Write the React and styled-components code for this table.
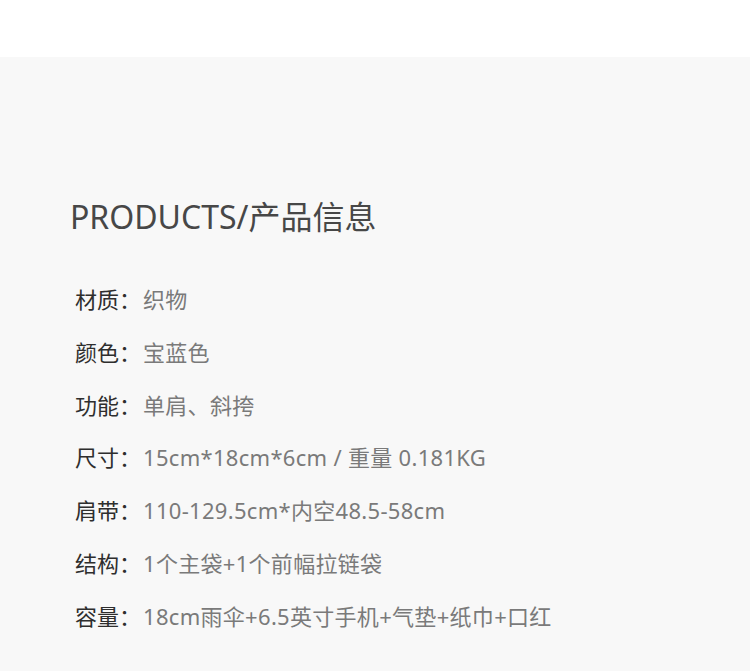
import React from "react";
import styled, { createGlobalStyle } from "styled-components";

const Global = createGlobalStyle`
  html, body { margin: 0; padding: 0; background: #f8f8f8; }
  body { font-family: "Noto Sans", "Noto Sans CJK SC", sans-serif; }
`;

const Page = styled.div`
  width: 750px;
  height: 671px;
  overflow: hidden;
  display: flex;
  flex-direction: column;
`;

const TopBand = styled.div`
  height: 57px;
  background: #ffffff;
  flex: none;
`;

const Section = styled.section`
  flex: 1;
  background: #f8f8f8;
  padding: 138px 0 0 70px;
`;

const Title = styled.h1`
  margin: 0 0 45px;
  font-size: 32px;
  line-height: 44px;
  font-weight: 400;
  color: #474747;
  letter-spacing: 0;
`;

const List = styled.dl`
  margin: 0;
  padding: 0 0 0 5px;
  display: flex;
  flex-direction: column;
  gap: 22.8px;
`;

const Row = styled.div`
  display: flex;
  font-size: 22px;
  line-height: 30px;
`;

const Label = styled.dt`
  margin: 0;
  color: #2e2e2e;
  padding-right: 2px;
`;

const Value = styled.dd`
  margin: 0;
  color: #7a7a7a;
  letter-spacing: 0.3px;
`;

const rows = [
  ["材质：", "织物"],
  ["颜色：", "宝蓝色"],
  ["功能：", "单肩、斜挎"],
  ["尺寸：", "15cm*18cm*6cm / 重量 0.181KG"],
  ["肩带：", "110-129.5cm*内空48.5-58cm"],
  ["结构：", "1个主袋+1个前幅拉链袋"],
  ["容量：", "18cm雨伞+6.5英寸手机+气垫+纸巾+口红"],
];

export default function App() {
  return (
    <Page>
      <Global />
      <TopBand />
      <Section>
        <Title>PRODUCTS/产品信息</Title>
        <List>
          {rows.map(([l, v]) => (
            <Row key={l}>
              <Label>{l}</Label>
              <Value>{v}</Value>
            </Row>
          ))}
        </List>
      </Section>
    </Page>
  );
}
